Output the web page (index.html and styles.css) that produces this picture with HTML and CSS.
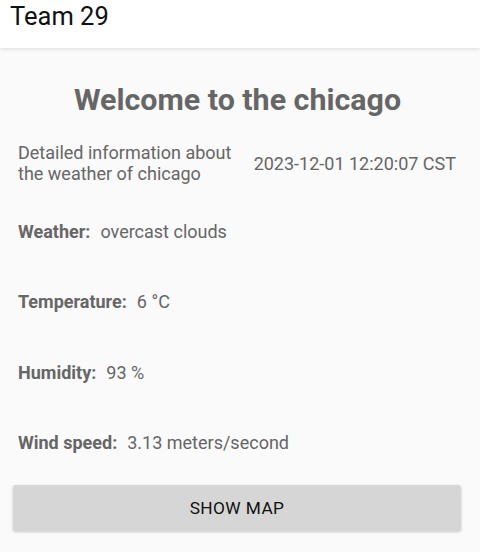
FILE: index.html
```
<!DOCTYPE html>
<html>
<head>
<meta charset="utf-8">
<link rel="stylesheet" href="styles.css">
</head>
<body>
<header class="appbar"><span class="appbar-title">Team 29</span></header>
<main class="content">
  <h1 class="headline">Welcome to the chicago</h1>
  <div class="intro">
    <p class="intro-text">Detailed information about the weather of chicago</p>
    <p class="intro-time">2023-12-01 12:20:07 CST</p>
  </div>
  <div class="row row-first"><span class="label">Weather:</span><span class="value">overcast clouds</span></div>
  <div class="row"><span class="label">Temperature:</span><span class="value">6 °C</span></div>
  <div class="row"><span class="label">Humidity:</span><span class="value">93 %</span></div>
  <div class="row"><span class="label">Wind speed:</span><span class="value">3.13 meters/second</span></div>
  <button class="map-btn">SHOW MAP</button>
</main>
</body>
</html>
```
FILE: styles.css
```
* { box-sizing: border-box; }
html, body { margin: 0; padding: 0; }
body {
  width: 480px;
  height: 552px;
  overflow: hidden;
  background: #fafafa;
  font-family: Roboto, "Noto Sans", sans-serif;
}
.appbar {
  height: 48px;
  background: #ffffff;
  box-shadow: 0 1px 4px rgba(0,0,0,0.12);
  padding-left: 10px;
  display: flex;
  align-items: flex-start;
  position: relative;
  z-index: 1;
}
.appbar-title {
  font-size: 25.5px;
  line-height: 32px;
  color: #111;
}
.content {
  padding: 0 18px;
  display: flex;
  flex-direction: column;
}
.headline {
  margin: 34px 0 0;
  padding-right: 5px;
  font-size: 30.4px;
  line-height: 36px;
  font-weight: 700;
  color: #666666;
  text-align: center;
}
.intro {
  margin-top: 24px;
  display: flex;
  align-items: center;
  justify-content: space-between;
}
.intro-text {
  margin: 0;
  width: 222px;
  font-size: 18px;
  line-height: 21px;
  color: #666666;
}
.intro-time {
  margin: 0 6px 0 0;
  font-size: 18px;
  color: #666666;
}
.row {
  height: 70.5px;
  display: flex;
  align-items: flex-end;
  font-size: 18px;
  color: #666666;
  line-height: 21px;
}
.row-first { height: 57.5px; }
.label { font-weight: 700; margin-right: 10px; }
.map-btn {
  margin: 32px -5px 0;
  width: 448px;
  height: 46px;
  border: none;
  border-radius: 3px;
  background: #d6d6d6;
  box-shadow: 0 1px 3px rgba(0,0,0,0.2);
  font-family: Roboto, sans-serif;
  font-size: 17.3px;
  color: #111;
  letter-spacing: 0.4px;
}
```
